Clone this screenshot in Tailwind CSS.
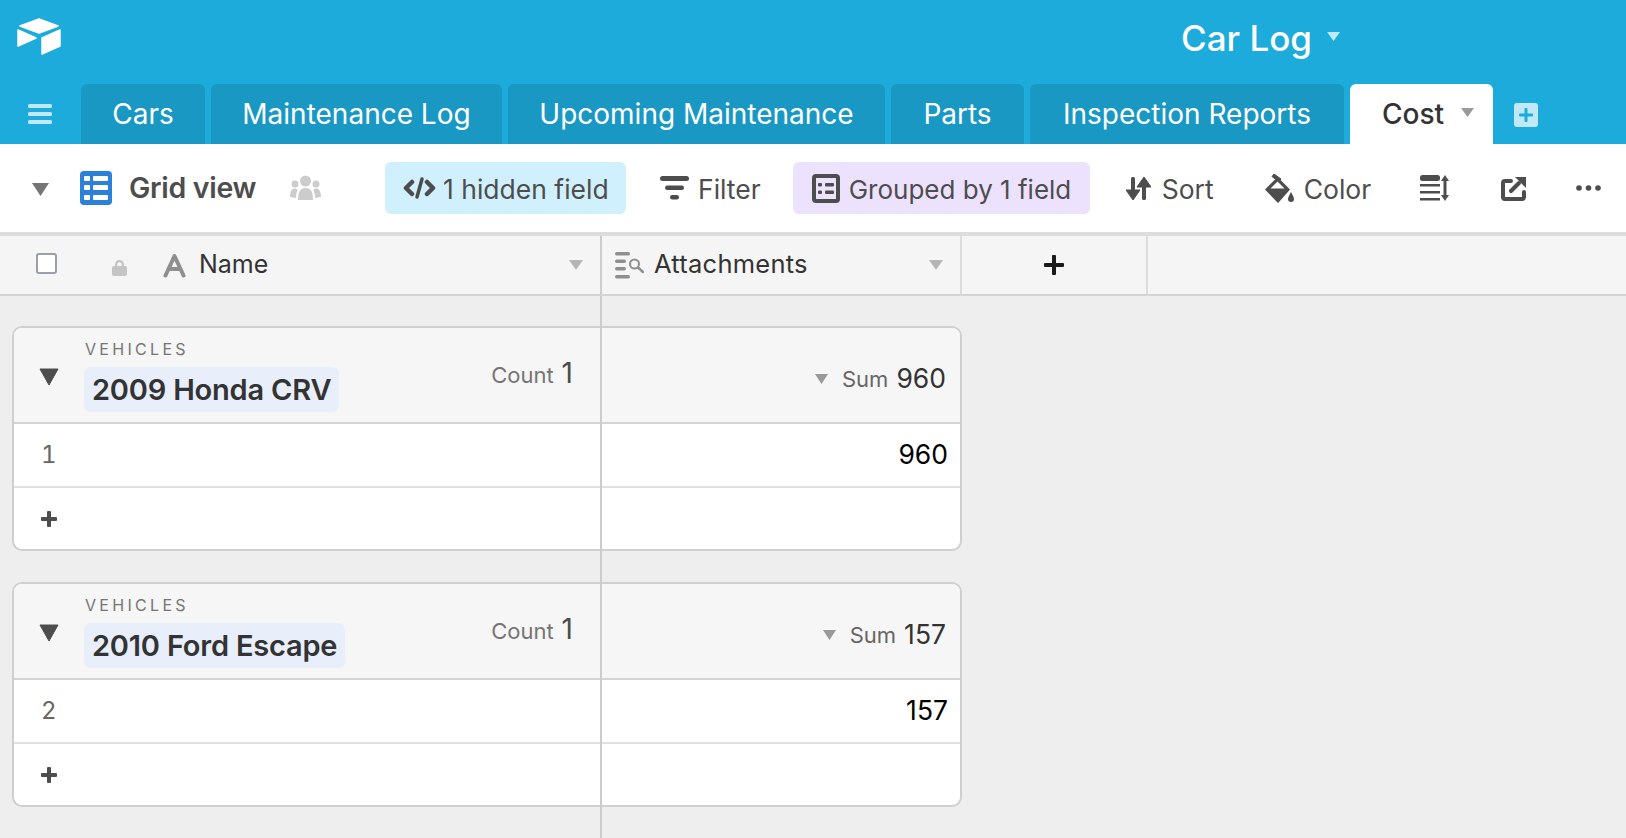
<!DOCTYPE html>
<html lang="en">
<head>
  <meta charset="UTF-8" />
  <title>Car Log - Cost</title>
  <script src="https://cdn.jsdelivr.net/npm/@tailwindcss/browser@4"></script>
</head>
<body class="w-[1626px] h-[838px] overflow-hidden bg-[#eeeeee] font-[Inter,sans-serif] text-[#333333]">
  <!-- app bar -->
  <header class="bg-[#1dabdb] h-[144px] flex flex-col">
    <div class="h-[84px] flex items-center">
      <svg class="ml-[17px] w-[44px] h-[37px] -mt-[12px]" viewBox="0 0 44 37" fill="#fff" stroke="#fff" stroke-width="1.500" stroke-linejoin="round">
        <path d="M22 1 41 8 22 15 3 8Z" />
        <path d="M1 12 19 20 1 28Z" />
        <path d="M43 12V28L25 36V20Z" />
      </svg>
      <div class="ml-[1120px] -mt-[8px] flex items-center text-white text-[35px] font-medium">
        Car Log
        <svg class="ml-[15px] -mt-[3px] w-[13px] h-[9px]" viewBox="0 0 13 9"><path d="M0 0H13L6.500 9Z" fill="#bfe9f7" /></svg>
      </div>
    </div>
    <div class="flex h-[60px]">
      <div class="w-[81px] flex items-center pl-[28px]">
        <svg class="w-[24px] h-[20px]" viewBox="0 0 24 20" fill="#bfe9f7"><rect y="0" width="24" height="4" rx="1.500" /><rect y="8" width="24" height="4" rx="1.500" /><rect y="16" width="24" height="4" rx="1.500" /></svg>
      </div>
      <div class="flex gap-[6px] text-[28px] text-white">
        <div class="w-[124px] rounded-t-md bg-[#1a98c4] flex items-center justify-center">Cars</div>
        <div class="w-[291px] rounded-t-md bg-[#1a98c4] flex items-center justify-center">Maintenance Log</div>
        <div class="w-[377px] rounded-t-md bg-[#1a98c4] flex items-center justify-center">Upcoming Maintenance</div>
        <div class="w-[133px] rounded-t-md bg-[#1a98c4] flex items-center justify-center">Parts</div>
        <div class="w-[314px] rounded-t-md bg-[#1a98c4] flex items-center justify-center">Inspection Reports</div>
        <div class="w-[143px] rounded-t-md bg-white text-[#333333] font-medium flex items-center pl-[32px]">
          Cost
          <svg class="ml-[17px] -mt-[3px] w-[13px] h-[9px]" viewBox="0 0 13 9"><path d="M0 0H13L6.500 9Z" fill="#999999" /></svg>
        </div>
      </div>
      <div class="ml-[21px] mt-[19px] w-[24px] h-[24px] rounded-[3px] bg-[#bfe9f7] flex items-center justify-center">
        <svg class="w-[14px] h-[14px]" viewBox="0 0 14 14" fill="#1dabdb"><rect x="5.500" width="3" height="14" rx="1" /><rect y="5.500" width="14" height="3" rx="1" /></svg>
      </div>
    </div>
  </header>

  <!-- view toolbar -->
  <div class="h-[88px] bg-white flex items-center text-[26.500px] text-[#4d4d4d]">
    <svg class="ml-[32px] mt-[2px] w-[17px] h-[13px]" viewBox="0 0 17 13"><path d="M0 0H17L8.500 13Z" fill="#757575" /></svg>
    <svg class="ml-[31px] w-[32px] h-[34px]" viewBox="0 0 32 34">
      <rect width="32" height="34" rx="4" fill="#2b80d8" />
      <g fill="#fff"><rect x="4" y="5" width="6" height="5" rx="1" /><rect x="13" y="5" width="15" height="5" rx="1" /><rect x="4" y="14" width="6" height="5" rx="1" /><rect x="13" y="14" width="15" height="5" rx="1" /><rect x="4" y="24" width="6" height="5" rx="1" /><rect x="13" y="24" width="15" height="5" rx="1" /></g>
    </svg>
    <span class="ml-[17px] w-[128px] font-semibold text-[28.500px] tracking-[-0.300px] whitespace-nowrap">Grid view</span>
    <svg class="ml-[33px] w-[31px] h-[26px]" viewBox="0 0 31 26" fill="#cccccc">
      <circle cx="15.500" cy="6" r="5.500" /><circle cx="5" cy="9" r="3.500" /><circle cx="26" cy="9" r="3.500" />
      <path d="M8 25C8 17 10 13 15.500 13S23 17 23 25Z" /><path d="M0 22C0 16 2 13.500 5 13.500 6 13.500 7 14 7.500 15 6.500 17 6 20 6 23Z" /><path d="M31 22C31 16 29 13.500 26 13.500 25 13.500 24 14 23.500 15 24.500 17 25 20 25 23Z" />
    </svg>

    <div class="ml-[64px] w-[241px] h-[52px] rounded-md bg-[#d0f0fd] flex items-center pl-[18px]">
      <svg class="w-[33px] h-[24px]" viewBox="0 0 33 24" fill="none" stroke="#4d4d4d" stroke-width="4.500" stroke-linejoin="round" stroke-linecap="round">
        <path d="M9 6 3 12 9 18" /><path d="M24 6 30 12 24 18" /><path d="M19 3 14 21" stroke-width="3.500" />
      </svg>
      <span class="ml-[7px] pt-[3px] whitespace-nowrap">1 hidden field</span>
    </div>

    <svg class="ml-[34px] w-[29px] h-[24px]" viewBox="0 0 29 24" fill="#4d4d4d"><rect width="29" height="5" rx="2.500" /><rect x="5" y="9.500" width="19" height="4.500" rx="2.250" /><rect x="10" y="19" width="9" height="4.500" rx="2.250" /></svg>
    <span class="ml-[9px] pt-[3px]">Filter</span>

    <div class="ml-[32px] w-[297px] h-[52px] rounded-md bg-[#ede2fe] flex items-center pl-[19px]">
      <svg class="w-[28px] h-[29px]" viewBox="0 0 28 29" fill="#4d4d4d">
        <path fill-rule="evenodd" d="M4 0H24A4 4 0 0 1 28 4V25A4 4 0 0 1 24 29H4A4 4 0 0 1 0 25V4A4 4 0 0 1 4 0ZM4 4V25H24V4Z" />
        <rect x="6" y="9" width="4" height="3.500" rx="1" /><rect x="13" y="9" width="9" height="3.500" rx="1" /><rect x="6" y="16.500" width="4" height="3.500" rx="1" /><rect x="13" y="16.500" width="9" height="3.500" rx="1" />
      </svg>
      <span class="ml-[9px] pt-[3px] text-[26px] whitespace-nowrap">Grouped by 1 field</span>
    </div>

    <svg class="ml-[36px] w-[25px] h-[25px]" viewBox="0 0 25 25" fill="#4d4d4d">
      <rect x="5" y="1" width="4" height="20" rx="1.500" /><path d="M0 14H14L7 24Z" stroke="#4d4d4d" stroke-linejoin="round" />
      <rect x="16" y="4" width="4" height="20" rx="1.500" /><path d="M11 11H25L18 1Z" stroke="#4d4d4d" stroke-linejoin="round" />
    </svg>
    <span class="ml-[11px] pt-[3px]">Sort</span>

    <svg class="ml-[51px] w-[29px] h-[29px]" viewBox="0 0 29 29" fill="#4d4d4d">
      <path d="M9 0 16 5 13.500 7.500 7 2.500Z" stroke="#4d4d4d" stroke-linejoin="round" />
      <path d="M12.500 4 24 15.500 13 28 1 15.500Z" stroke="#4d4d4d" stroke-width="1.500" stroke-linejoin="round" />
      <path d="M12.500 7.500 19.500 14.500H5.500Z" fill="#fff" />
      <path d="M26 18C27.500 21 29 23 29 25A3 3 0 0 1 23 25C23 23 24.500 21 26 18Z" />
    </svg>
    <span class="ml-[10px] pt-[3px]">Color</span>

    <svg class="ml-[49px] w-[29px] h-[26px]" viewBox="0 0 29 26" fill="#4d4d4d">
      <rect width="20" height="6" rx="2.500" /><rect y="9" width="20" height="2.500" /><rect y="16" width="20" height="2.500" /><rect y="23" width="20" height="2.500" />
      <rect x="23.500" y="3" width="3" height="20" /><path d="M25 0 29 6H21Z" /><path d="M25 26 21 20H29Z" />
    </svg>
    <svg class="ml-[52px] w-[25px] h-[25px]" viewBox="0 0 25 25" fill="none" stroke="#4d4d4d" stroke-width="4" stroke-linecap="round" stroke-linejoin="round">
      <path d="M10 5H4A2 2 0 0 0 2 7V21A2 2 0 0 0 4 23H21A2 2 0 0 0 23 21V16" /><path d="M10 15 18 7" />
      <path d="M14 1H25V12Z" fill="#4d4d4d" stroke="none" />
    </svg>
    <svg class="ml-[50px] w-[25px] h-[6px]" viewBox="0 0 25 6" fill="#4d4d4d"><circle cx="3" cy="3" r="2.800" /><circle cx="12.500" cy="3" r="2.800" /><circle cx="22" cy="3" r="2.800" /></svg>
  </div>

  <!-- column header -->
  <div class="h-[64px] bg-[#f5f5f5] border-t-4 border-t-[#dddddd] border-b-2 border-b-[#d4d4d4] flex items-center">
    <div class="w-[602px] h-full flex items-center border-r-2 border-r-[#cccccc] shrink-0">
      <div class="ml-[36px] -mt-[3px] w-[21px] h-[21px] rounded-[3px] border-2 border-[#9a9fa8] bg-white"></div>
      <svg class="ml-[55px] mt-[5px] w-[15px] h-[17px]" viewBox="0 0 15 17" fill="#c4c4c4"><rect y="7" width="15" height="10" rx="2" /><path d="M3 8V5.500A4.500 4.500 0 0 1 12 5.500V8H9.800V5.500A2.300 2.300 0 0 0 5.200 5.500V8Z" /></svg>
      <svg class="ml-[36px] mt-[1px] w-[23px] h-[25px]" viewBox="0 0 23 25" fill="none" stroke="#8f8f8f" stroke-width="4" stroke-linecap="round" stroke-linejoin="round"><path d="M2.500 22.500 11.500 3 20.500 22.500" /><path d="M6 16H17" /></svg>
      <span class="ml-[13px] text-[25px]">Name</span>
      <svg class="ml-auto mr-[17px] w-[14px] h-[10px]" viewBox="0 0 14 10"><path d="M0 0H14L7 10Z" fill="#b5b5b5" /></svg>
    </div>
    <div class="w-[360px] h-full flex items-center border-r-2 border-r-[#dddddd] shrink-0">
      <svg class="ml-[13px] w-[29px] h-[27px]" viewBox="0 0 29 27" fill="none">
        <g fill="#8f8f8f"><rect width="15" height="3.500" rx="1.700" /><rect y="7.500" width="11" height="3.500" rx="1.700" /><rect y="15" width="11" height="3.500" rx="1.700" /><rect y="23" width="15" height="3.500" rx="1.700" /></g>
        <circle cx="19.500" cy="12" r="4.500" stroke="#8f8f8f" stroke-width="2" /><path d="M23 15.500 28 20" stroke="#8f8f8f" stroke-width="2.500" stroke-linecap="round" />
      </svg>
      <span class="ml-[10px] -mt-[1px] text-[25.500px] tracking-[0.250px]">Attachments</span>
      <svg class="ml-auto mr-[17px] w-[14px] h-[10px]" viewBox="0 0 14 10"><path d="M0 0H14L7 10Z" fill="#b5b5b5" /></svg>
    </div>
    <div class="w-[186px] h-full flex items-center justify-center border-r-2 border-r-[#dddddd] shrink-0">
      <svg class="w-[20px] h-[20px]" viewBox="0 0 20 20" fill="#1a1a1a"><rect x="8" width="4" height="20" rx="1" /><rect y="8" width="20" height="4" rx="1" /></svg>
    </div>
  </div>

  <!-- grouped rows -->
  <div class="relative h-[542px] overflow-hidden pl-[12px] pt-[30px] flex flex-col gap-[31px]">
    <div class="absolute left-[600px] top-0 bottom-0 w-[2px] bg-[#cccccc] z-10"></div>

    <section class="w-[950px] h-[225px] shrink-0 rounded-[10px] border-2 border-[#cfcfcf] bg-white overflow-hidden">
      <div class="h-[96px] bg-[#f6f6f6] border-b-2 border-b-[#d4d4d4] flex">
        <div class="w-[587px] flex">
          <svg class="ml-[25px] mt-[40px] w-[20px] h-[18px]" viewBox="0 0 20 18"><path d="M1 1H19L10 17Z" fill="#4d4d4d" stroke="#4d4d4d" stroke-linejoin="round" /></svg>
          <div class="ml-[25px] mt-[11px]">
            <div class="text-[16px] leading-[20px] tracking-[3.300px] text-[#757575] pl-[1px]">VEHICLES</div>
            <div class="mt-[8px] h-[45px] px-[8px] rounded-md bg-[#e9eefb] flex items-center text-[29px] font-semibold whitespace-nowrap tracking-[-0.200px]">2009 Honda CRV</div>
          </div>
          <div class="ml-auto mr-[28px] mt-[24px] flex items-baseline h-[30px] text-[#757575]"><span class="text-[22px]">Count</span><span class="ml-[8px] text-[28px] text-[#4d4d4d]">1</span></div>
        </div>
        <div class="flex-1 flex items-center justify-end pr-[14px] pt-[8px]">
          <svg class="mr-[14px] w-[13px] h-[10px]" viewBox="0 0 13 10"><path d="M0 0H13L6.500 10Z" fill="#999999" /></svg>
          <span class="text-[22px] text-[#666666]">Sum</span><span class="ml-[8px] text-[26.500px] text-[#333333]">960</span>
        </div>
      </div>
      <div class="h-[64px] border-b-2 border-b-[#e0e0e0] flex items-center text-[24px]">
        <div class="w-[587px] pl-[27px] text-[#666666] tabular-nums">1</div>
        <div class="flex-1 text-right pr-[12px] text-[26.500px] text-black">960</div>
      </div>
      <div class="h-[61px] flex items-center pl-[27px]">
        <svg class="w-[16px] h-[16px]" viewBox="0 0 16 16" fill="#4d4d4d"><rect x="6" width="4" height="16" rx="1" /><rect y="6" width="16" height="4" rx="1" /></svg>
      </div>
    </section>

    <section class="w-[950px] h-[225px] shrink-0 rounded-[10px] border-2 border-[#cfcfcf] bg-white overflow-hidden">
      <div class="h-[96px] bg-[#f6f6f6] border-b-2 border-b-[#d4d4d4] flex">
        <div class="w-[587px] flex">
          <svg class="ml-[25px] mt-[40px] w-[20px] h-[18px]" viewBox="0 0 20 18"><path d="M1 1H19L10 17Z" fill="#4d4d4d" stroke="#4d4d4d" stroke-linejoin="round" /></svg>
          <div class="ml-[25px] mt-[11px]">
            <div class="text-[16px] leading-[20px] tracking-[3.300px] text-[#757575] pl-[1px]">VEHICLES</div>
            <div class="mt-[8px] h-[45px] px-[8px] rounded-md bg-[#e9eefb] flex items-center text-[29px] font-semibold whitespace-nowrap tracking-[-0.200px]">2010 Ford Escape</div>
          </div>
          <div class="ml-auto mr-[28px] mt-[24px] flex items-baseline h-[30px] text-[#757575]"><span class="text-[22px]">Count</span><span class="ml-[8px] text-[28px] text-[#4d4d4d]">1</span></div>
        </div>
        <div class="flex-1 flex items-center justify-end pr-[14px] pt-[8px]">
          <svg class="mr-[14px] w-[13px] h-[10px]" viewBox="0 0 13 10"><path d="M0 0H13L6.500 10Z" fill="#999999" /></svg>
          <span class="text-[22px] text-[#666666]">Sum</span><span class="ml-[8px] text-[26.500px] text-[#333333]">157</span>
        </div>
      </div>
      <div class="h-[64px] border-b-2 border-b-[#e0e0e0] flex items-center text-[24px]">
        <div class="w-[587px] pl-[27px] text-[#666666] tabular-nums">2</div>
        <div class="flex-1 text-right pr-[12px] text-[26.500px] text-black">157</div>
      </div>
      <div class="h-[61px] flex items-center pl-[27px]">
        <svg class="w-[16px] h-[16px]" viewBox="0 0 16 16" fill="#4d4d4d"><rect x="6" width="4" height="16" rx="1" /><rect y="6" width="16" height="4" rx="1" /></svg>
      </div>
    </section>
  </div>
</body>
</html>
